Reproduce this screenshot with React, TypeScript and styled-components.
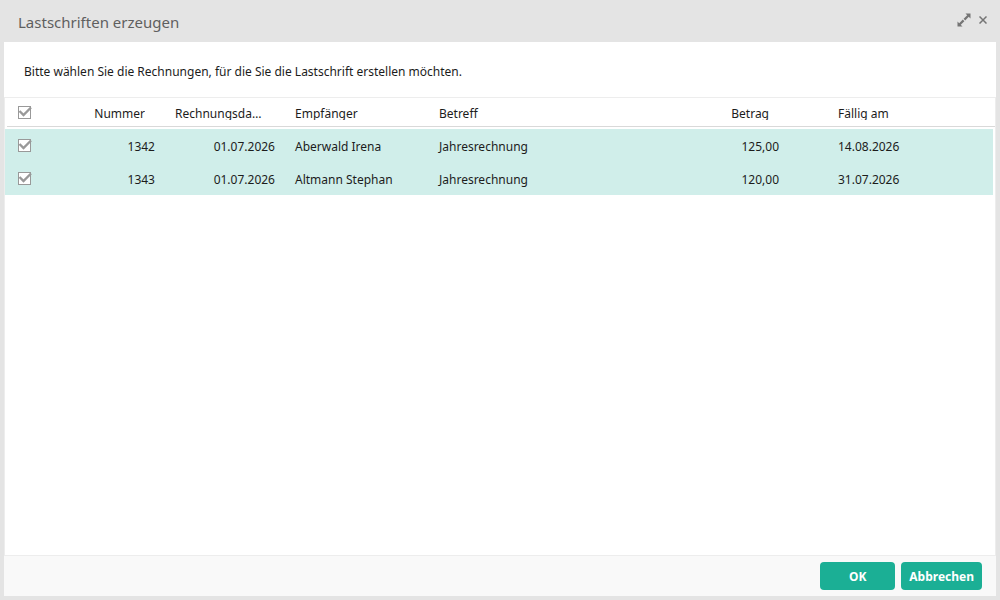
import React, { useState } from "react";
import styled, { createGlobalStyle } from "styled-components";

const GlobalStyle = createGlobalStyle`
  *, *::before, *::after { box-sizing: border-box; }
  body {
    margin: 0;
    background: #e4e4e4;
    color: #1c1c1c;
    font-family: "Segoe UI", "Noto Sans", "Open Sans", sans-serif;
    font-size: 12px;
    line-height: 16px;
  }
`;

const Dialog = styled.section`
  display: flex;
  flex-direction: column;
  min-height: 100vh;
  padding: 0 4px 4px;
  background: #e4e4e4;
`;

const TitleBar = styled.header`
  display: flex;
  justify-content: space-between;
  height: 42px;
  padding: 12px 5px 0 14px;
`;

const Title = styled.h1`
  margin: 0;
  color: #5f5f5f;
  font-size: 15px;
  font-weight: 400;
  line-height: 20px;
`;

const WindowTools = styled.div`
  display: flex;
  height: 16px;
  gap: 3px;
`;

const ToolButton = styled.button`
  display: flex;
  width: 16px;
  height: 16px;
  align-items: center;
  justify-content: center;
  padding: 0;
  border: 0;
  background: none;
  color: #757575;
  cursor: pointer;
`;

const Intro = styled.p`
  margin: 0;
  padding: 22px 20px 17px;
  background: #fff;
`;

const GridPanel = styled.div`
  flex: 1;
  padding-right: 2px;
  border: 1px solid #ededed;
  background: #fff;
`;

const Table = styled.table`
  width: 100%;
  border-collapse: separate;
  border-spacing: 0;
  table-layout: fixed;
`;

const Col = styled.col<{ $width?: number }>`
  width: ${({ $width }) => ($width ? `${$width}px` : "auto")};
`;

const HeaderRow = styled.tr`
  height: 28px;
  box-shadow: 2px 0 0 #fff, 2px 1px 0 #d9d9d9;
`;

const BodyRow = styled.tr<{ $selected: boolean }>`
  height: 33px;
  background: ${({ $selected }) => ($selected ? "#d0eeea" : "#fff")};
`;

interface CellProps {
  $align?: "left" | "right";
  $indent?: number;
}

const HeadCell = styled.th<CellProps>`
  padding: 2px 20px 0 ${({ $indent = 10 }) => $indent}px;
  background: #fff;
  font-weight: 400;
  text-align: ${({ $align = "left" }) => $align};
`;

const HeadLabel = styled.span`
  display: block;
  height: 14px;
  overflow: hidden;
  line-height: 16px;
  text-overflow: ellipsis;
  white-space: nowrap;
`;

const Cell = styled.td<CellProps>`
  overflow: hidden;
  padding: 2px 10px 0 ${({ $indent = 10 }) => $indent}px;
  text-align: ${({ $align = "left" }) => $align};
  text-overflow: ellipsis;
  white-space: nowrap;
`;

const CheckCell = styled.td`
  padding: 0 0 0 13px;
`;

const Rows = styled.tbody`
  &::before {
    content: "";
    display: table-row;
    height: 3px;
  }
`;

const CheckWrap = styled.span`
  position: relative;
  display: block;
  width: 14px;
  height: 13px;
`;

const CheckInput = styled.input`
  display: block;
  width: 13px;
  height: 13px;
  margin: 0;
  appearance: none;
  border: 1px solid #999;
  background: #fff;
  cursor: pointer;

  &:not(:checked) + svg {
    display: none;
  }
`;

const CheckMark = styled.svg`
  position: absolute;
  inset: 0;
  pointer-events: none;
`;

const Footer = styled.footer`
  display: flex;
  justify-content: flex-end;
  gap: 6px;
  padding: 6px 14px;
  background: #f9f9f9;
`;

const ActionButton = styled.button`
  min-width: 75px;
  height: 28px;
  padding: 2px 8px 0;
  border: 0;
  border-radius: 4px;
  background: #1baf95;
  color: #fff;
  font: inherit;
  font-weight: 700;
  cursor: pointer;
`;

interface CheckboxProps {
  label: string;
  checked: boolean;
  onChange: () => void;
}

function Checkbox({ label, checked, onChange }: CheckboxProps) {
  return (
    <CheckWrap>
      <CheckInput type="checkbox" aria-label={label} checked={checked} onChange={onChange} />
      <CheckMark width="14" height="13" viewBox="0 0 14 13" aria-hidden="true">
        <path d="M1.5 5L5.5 9L13 1.5" fill="none" stroke="#999" strokeWidth="2.4" />
      </CheckMark>
    </CheckWrap>
  );
}

const invoices = [
  { number: "1342", date: "01.07.2026", recipient: "Aberwald Irena", subject: "Jahresrechnung", amount: "125,00", due: "14.08.2026" },
  { number: "1343", date: "01.07.2026", recipient: "Altmann Stephan", subject: "Jahresrechnung", amount: "120,00", due: "31.07.2026" },
];

export default function App() {
  const [selected, setSelected] = useState<string[]>(invoices.map((i) => i.number));
  const allSelected = selected.length === invoices.length;
  const toggle = (n: string) =>
    setSelected((s) => (s.includes(n) ? s.filter((x) => x !== n) : [...s, n]));

  return (
    <>
      <GlobalStyle />
      <Dialog role="dialog" aria-labelledby="dialog-title">
        <TitleBar>
          <Title id="dialog-title">Lastschriften erzeugen</Title>
          <WindowTools>
            <ToolButton type="button" aria-label="Maximieren">
              <svg width="14" height="14" viewBox="0 0 14 14" aria-hidden="true">
                <path d="M8.5 0.5H13.5V5.5ZM5.5 13.5H0.5V8.5Z" fill="currentColor" />
                <path d="M11.5 2.5L7.4 6.6M6.6 7.4L2.5 11.5" stroke="currentColor" strokeWidth="2.2" />
              </svg>
            </ToolButton>
            <ToolButton type="button" aria-label="Schließen">
              <svg width="8" height="8" viewBox="0 0 8 8" aria-hidden="true">
                <path d="M0.5 0.5L7.5 7.5M7.5 0.5L0.5 7.5" stroke="currentColor" strokeWidth="1.5" />
              </svg>
            </ToolButton>
          </WindowTools>
        </TitleBar>
        <Intro>Bitte wählen Sie die Rechnungen, für die Sie die Lastschrift erstellen möchten.</Intro>
        <GridPanel>
          <Table>
            <colgroup>
              <Col $width={80} />
              <Col $width={80} />
              <Col $width={120} />
              <Col $width={144} />
              <Col />
              <Col $width={90} />
              <Col $width={204} />
            </colgroup>
            <thead>
              <HeaderRow>
                <CheckCell>
                  <Checkbox
                    label="Alle auswählen"
                    checked={allSelected}
                    onChange={() => setSelected(allSelected ? [] : invoices.map((i) => i.number))}
                  />
                </CheckCell>
                <HeadCell scope="col" $align="right" $indent={0}><HeadLabel>Nummer</HeadLabel></HeadCell>
                <HeadCell scope="col"><HeadLabel>Rechnungsdatum</HeadLabel></HeadCell>
                <HeadCell scope="col"><HeadLabel>Empfänger</HeadLabel></HeadCell>
                <HeadCell scope="col"><HeadLabel>Betreff</HeadLabel></HeadCell>
                <HeadCell scope="col" $align="right"><HeadLabel>Betrag</HeadLabel></HeadCell>
                <HeadCell scope="col" $indent={49}><HeadLabel>Fällig am</HeadLabel></HeadCell>
              </HeaderRow>
            </thead>
            <Rows>
              {invoices.map((inv) => (
                <BodyRow key={inv.number} $selected={selected.includes(inv.number)}>
                  <CheckCell>
                    <Checkbox
                      label={`Rechnung ${inv.number} auswählen`}
                      checked={selected.includes(inv.number)}
                      onChange={() => toggle(inv.number)}
                    />
                  </CheckCell>
                  <Cell $align="right">{inv.number}</Cell>
                  <Cell $align="right">{inv.date}</Cell>
                  <Cell>{inv.recipient}</Cell>
                  <Cell>{inv.subject}</Cell>
                  <Cell $align="right">{inv.amount}</Cell>
                  <Cell $indent={49}>{inv.due}</Cell>
                </BodyRow>
              ))}
            </Rows>
          </Table>
        </GridPanel>
        <Footer>
          <ActionButton type="button">OK</ActionButton>
          <ActionButton type="button">Abbrechen</ActionButton>
        </Footer>
      </Dialog>
    </>
  );
}
